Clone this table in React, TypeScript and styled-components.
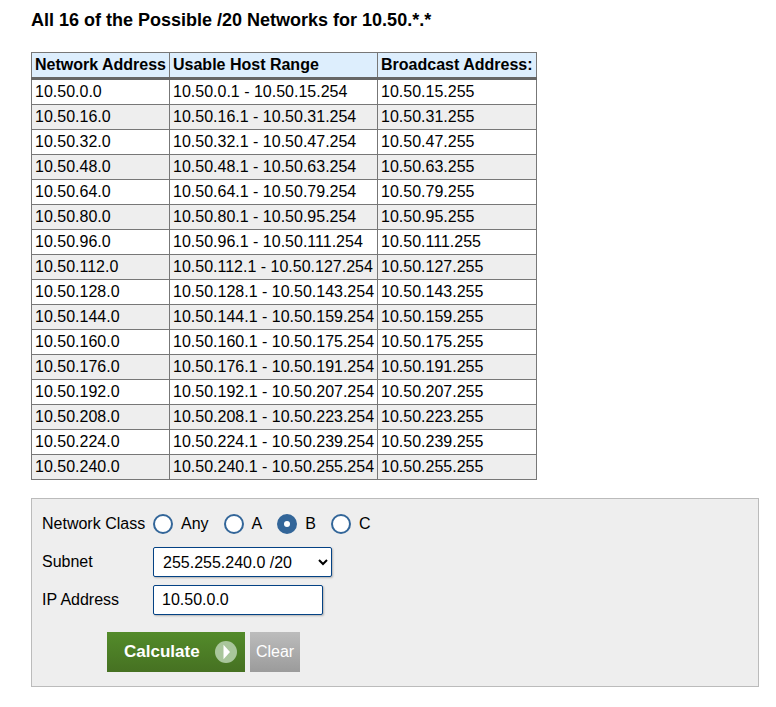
import React, { useState } from "react";
import styled, { createGlobalStyle } from "styled-components";

const GlobalStyle = createGlobalStyle`
  body {
    margin: 0;
    background: #fff;
    font-family: "Liberation Sans", Arial, sans-serif;
    color: #000;
  }
`;

const Page = styled.div`
  padding: 10px 17px 20px 31px;
`;

const Title = styled.h2`
  margin: 0 0 21px;
  font-size: 18px;
  font-weight: bold;
  line-height: 21px;
`;

const NetTable = styled.table`
  border-collapse: collapse;
  border-spacing: 0;
  font-size: 16px;
  line-height: 18px;

  th {
    background: #ddeefd;
    text-align: left;
    font-weight: bold;
    padding: 3px 3px;
    border: 1px solid #777;
    border-bottom: 3px solid #666;
    white-space: nowrap;
  }

  td {
    padding: 3px 3px;
    border: 1px solid #777;
    white-space: nowrap;
  }

  tbody tr:nth-child(even) td {
    background: #eeeeee;
  }
`;

const Panel = styled.form`
  margin-top: 18px;
  background: #eeeeee;
  border: 1px solid #bbbbbb;
  padding: 10px 10px 14px 10px;
  display: grid;
  grid-template-columns: 111px 1fr;
  row-gap: 8px;
  font-size: 16px;
`;

const FieldLabel = styled.div`
  height: 30px;
  display: flex;
  align-items: center;
  white-space: nowrap;
`;

const Control = styled.div`
  height: 30px;
  display: flex;
  align-items: center;
`;

const RadioOption = styled.label`
  display: flex;
  align-items: center;
  margin-right: 15px;
  cursor: pointer;
`;

const RadioMark = styled.span<{ $checked: boolean }>`
  box-sizing: border-box;
  width: 20px;
  height: 20px;
  border-radius: 50%;
  border: 2px solid #336699;
  background: ${(p) => (p.$checked ? "#336699" : "#fff")};
  margin-right: 8px;
  display: flex;
  align-items: center;
  justify-content: center;

  &::after {
    content: "";
    display: ${(p) => (p.$checked ? "block" : "none")};
    width: 6px;
    height: 6px;
    border-radius: 50%;
    background: #fff;
  }
`;

const Select = styled.select`
  box-sizing: border-box;
  width: 179px;
  height: 30px;
  font-family: "Liberation Sans", Arial, sans-serif;
  font-size: 16px;
  padding: 0 4px 0 5px;
  border: 1px solid #044284;
  border-radius: 2px;
  background: #fff;
  color: #000;
  box-shadow: 1px 1px 2px rgba(0, 0, 0, 0.25);
`;

const TextInput = styled.input`
  box-sizing: border-box;
  width: 170px;
  height: 30px;
  font-family: "Liberation Sans", Arial, sans-serif;
  font-size: 16px;
  padding: 0 8px;
  border: 1px solid #044284;
  border-radius: 2px;
  background: #fff;
  color: #000;
  box-shadow: 1px 1px 2px rgba(0, 0, 0, 0.25);
`;

const ButtonRow = styled.div`
  grid-column: 1 / span 2;
  display: flex;
  gap: 5px;
  margin-top: 9px;
  padding-left: 65px;
`;

const CalcButton = styled.button`
  height: 40px;
  width: 138px;
  border: 0;
  padding: 0 0 0 17px;
  display: flex;
  align-items: center;
  background: linear-gradient(#538b2a, #467122);
  color: #fff;
  font-family: "Liberation Sans", Arial, sans-serif;
  font-weight: bold;
  font-size: 17px;
  cursor: pointer;

  svg {
    margin-left: 15px;
  }
`;

const ClearButton = styled.button`
  height: 40px;
  width: 50px;
  border: 0;
  padding: 0;
  background: linear-gradient(#bcbcbc, #9b9b9b);
  color: #fff;
  font-family: "Liberation Sans", Arial, sans-serif;
  font-size: 16px;
  cursor: pointer;
`;

const rows = Array.from({ length: 16 }, (_, i) => {
  const s = i * 16;
  const e = s + 15;
  return {
    net: `10.50.${s}.0`,
    range: `10.50.${s}.1 - 10.50.${e}.254`,
    bcast: `10.50.${e}.255`,
  };
});

const classes = ["Any", "A", "B", "C"];

export default function App() {
  const [cls, setCls] = useState("B");

  return (
    <Page>
      <GlobalStyle />
      <Title>All 16 of the Possible /20 Networks for 10.50.*.*</Title>
      <NetTable>
        <thead>
          <tr>
            <th>Network Address</th>
            <th>Usable Host Range</th>
            <th>Broadcast Address:</th>
          </tr>
        </thead>
        <tbody>
          {rows.map((r) => (
            <tr key={r.net}>
              <td>{r.net}</td>
              <td>{r.range}</td>
              <td>{r.bcast}</td>
            </tr>
          ))}
        </tbody>
      </NetTable>

      <Panel onSubmit={(e) => e.preventDefault()}>
        <FieldLabel>Network Class</FieldLabel>
        <Control>
          {classes.map((c) => (
            <RadioOption key={c} onClick={() => setCls(c)}>
              <RadioMark $checked={cls === c} />
              {c}
            </RadioOption>
          ))}
        </Control>

        <FieldLabel>Subnet</FieldLabel>
        <Control>
          <Select defaultValue="20">
            <option value="20">255.255.240.0 /20</option>
          </Select>
        </Control>

        <FieldLabel>IP Address</FieldLabel>
        <Control>
          <TextInput defaultValue="10.50.0.0" />
        </Control>

        <ButtonRow>
          <CalcButton type="submit">
            Calculate
            <svg width="22" height="22" viewBox="0 0 22 22">
              <circle cx="11" cy="11" r="11" fill="#a9c69b" />
              <path d="M8.5 3.8 L15 11 L8.5 18.2 Z" fill="#fff" />
            </svg>
          </CalcButton>
          <ClearButton type="button">Clear</ClearButton>
        </ButtonRow>
      </Panel>
    </Page>
  );
}
